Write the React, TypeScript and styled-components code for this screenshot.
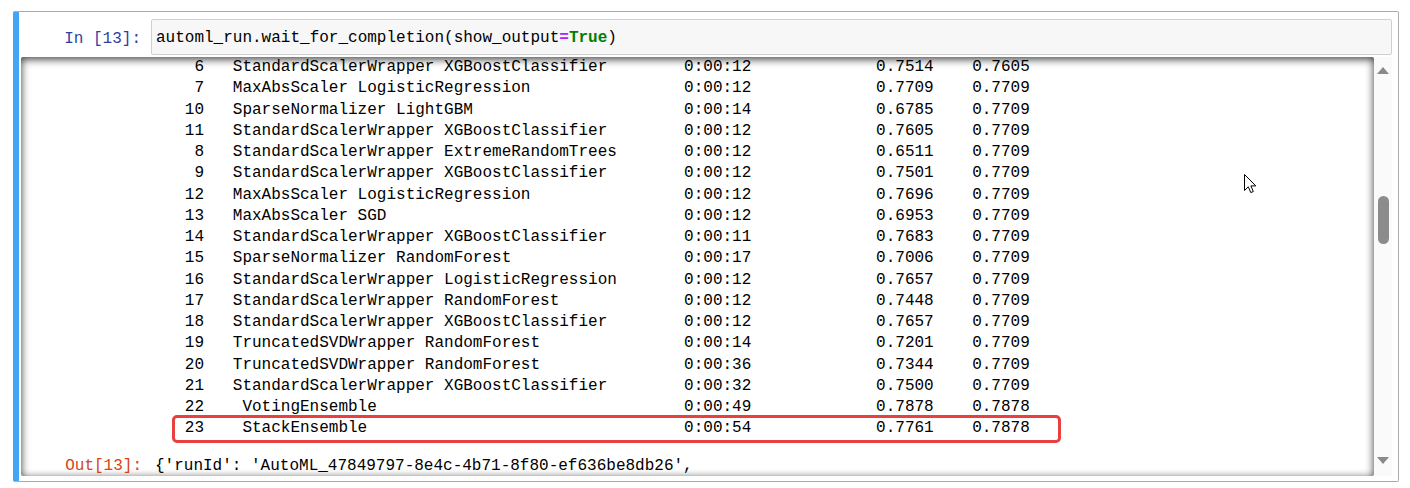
import React from 'react';
import styled, { createGlobalStyle } from 'styled-components';

// Styles
const GlobalStyle = createGlobalStyle`
  html, body {
    margin: 0;
    padding: 0;
    background: #ffffff;
  }
  body {
    font-family: "Liberation Mono", "DejaVu Sans Mono", monospace;
    font-size: 16px;
    color: #000000;
  }
`;

const Page = styled.div`
  position: relative;
  width: 1410px;
  height: 488px;
  padding: 11px 0 0 13px;
  box-sizing: border-box;
  overflow: hidden;
`;

const Cell = styled.div`
  width: 1386px;
  height: 471px;
  box-sizing: border-box;
  border: 1px solid #ababab;
  border-left: 6px solid #42a5f5;
  border-radius: 2px;
  padding: 7px 6px 5px 1px;
  display: flex;
  flex-direction: column;
  gap: 2px;
`;

const InputRow = styled.div`
  display: flex;
  align-items: stretch;
  height: 36px;
`;

const Prompt = styled.div<{ $out?: boolean }>`
  flex: 0 0 131px;
  box-sizing: border-box;
  padding-right: 10px;
  padding-top: 2px;
  text-align: right;
  line-height: 36px;
  color: ${(p) => (p.$out ? '#d84315' : '#303f9f')};
  white-space: pre;
`;

const CodeBox = styled.div`
  flex: 1;
  background: #f7f7f7;
  border: 1px solid #cfcfcf;
  border-radius: 2px;
  padding: 2px 0 0 4px;
  box-sizing: border-box;
  line-height: 32px;
  white-space: pre;
`;

const Operator = styled.span`
  color: #aa22ff;
  font-weight: bold;
`;

const Keyword = styled.span`
  color: #008000;
  font-weight: bold;
`;

const OutputScroll = styled.div`
  display: flex;
  height: 419px;
  margin-left: 1px;
`;

const OutputContent = styled.div`
  flex: 1;
  overflow: hidden;
  border-radius: 2px;
  box-shadow: inset 0 2px 8px rgba(0, 0, 0, 0.8);
`;

const Stream = styled.div`
  padding-left: 135px;
`;

const Row = styled.div<{ $highlight?: boolean }>`
  position: relative;
  display: grid;
  grid-template-columns: 5ch 50ch 20ch 10ch 1fr;
  line-height: 21.25px;
  height: 21.25px;
  white-space: pre;

  ${(p) =>
    p.$highlight &&
    `
    &::after {
      content: '';
      position: absolute;
      left: 16px;
      top: -3px;
      width: 889px;
      height: 28px;
      box-sizing: border-box;
      border: 3px solid #e8403f;
      border-radius: 5px;
      pointer-events: none;
    }
  `}
`;

const Num = styled.span`
  text-align: right;
`;

const Name = styled.span`
  padding-left: 3ch;
`;

const ResultRow = styled.div`
  display: flex;
  margin-top: 16px;
  line-height: 21.25px;
`;

const ResultPrompt = styled(Prompt)`
  line-height: 21.25px;
  padding-top: 0;
`;

const ResultText = styled.div`
  padding-left: 3px;
  white-space: pre;
`;

const Scrollbar = styled.div`
  flex: 0 0 18px;
  background: #fafafa;
  display: flex;
  flex-direction: column;
  align-items: center;
  padding: 10px 0 12px;
  box-sizing: border-box;
`;

const Arrow = styled.div<{ $down?: boolean }>`
  width: 0;
  height: 0;
  border-left: 6.5px solid transparent;
  border-right: 6.5px solid transparent;
  ${(p) =>
    p.$down
      ? 'border-top: 7px solid #8a8a8a;'
      : 'border-bottom: 7px solid #8a8a8a;'}
`;

const Track = styled.div`
  flex: 1;
  display: flex;
  justify-content: center;
`;

const Thumb = styled.div`
  width: 11px;
  height: 48px;
  margin-top: 122px;
  border-radius: 6px;
  background: #8c8c8c;
`;

const Cursor = styled.svg`
  position: absolute;
  left: 1244px;
  top: 174px;
`;

interface Run {
  iter: number;
  pipeline: string;
  duration: string;
  metric: string;
  best: string;
}

const runs: Run[] = [
  { iter: 6, pipeline: 'StandardScalerWrapper XGBoostClassifier', duration: '0:00:12', metric: '0.7514', best: '0.7605' },
  { iter: 7, pipeline: 'MaxAbsScaler LogisticRegression', duration: '0:00:12', metric: '0.7709', best: '0.7709' },
  { iter: 10, pipeline: 'SparseNormalizer LightGBM', duration: '0:00:14', metric: '0.6785', best: '0.7709' },
  { iter: 11, pipeline: 'StandardScalerWrapper XGBoostClassifier', duration: '0:00:12', metric: '0.7605', best: '0.7709' },
  { iter: 8, pipeline: 'StandardScalerWrapper ExtremeRandomTrees', duration: '0:00:12', metric: '0.6511', best: '0.7709' },
  { iter: 9, pipeline: 'StandardScalerWrapper XGBoostClassifier', duration: '0:00:12', metric: '0.7501', best: '0.7709' },
  { iter: 12, pipeline: 'MaxAbsScaler LogisticRegression', duration: '0:00:12', metric: '0.7696', best: '0.7709' },
  { iter: 13, pipeline: 'MaxAbsScaler SGD', duration: '0:00:12', metric: '0.6953', best: '0.7709' },
  { iter: 14, pipeline: 'StandardScalerWrapper XGBoostClassifier', duration: '0:00:11', metric: '0.7683', best: '0.7709' },
  { iter: 15, pipeline: 'SparseNormalizer RandomForest', duration: '0:00:17', metric: '0.7006', best: '0.7709' },
  { iter: 16, pipeline: 'StandardScalerWrapper LogisticRegression', duration: '0:00:12', metric: '0.7657', best: '0.7709' },
  { iter: 17, pipeline: 'StandardScalerWrapper RandomForest', duration: '0:00:12', metric: '0.7448', best: '0.7709' },
  { iter: 18, pipeline: 'StandardScalerWrapper XGBoostClassifier', duration: '0:00:12', metric: '0.7657', best: '0.7709' },
  { iter: 19, pipeline: 'TruncatedSVDWrapper RandomForest', duration: '0:00:14', metric: '0.7201', best: '0.7709' },
  { iter: 20, pipeline: 'TruncatedSVDWrapper RandomForest', duration: '0:00:36', metric: '0.7344', best: '0.7709' },
  { iter: 21, pipeline: 'StandardScalerWrapper XGBoostClassifier', duration: '0:00:32', metric: '0.7500', best: '0.7709' },
  { iter: 22, pipeline: ' VotingEnsemble', duration: '0:00:49', metric: '0.7878', best: '0.7878' },
  { iter: 23, pipeline: ' StackEnsemble', duration: '0:00:54', metric: '0.7761', best: '0.7878' },
];

const App: React.FC = () => {
  return (
    <Page>
      <GlobalStyle />
      <Cell>
        <InputRow>
          <Prompt>In [13]:</Prompt>
          <CodeBox>
            automl_run.wait_for_completion(show_output<Operator>=</Operator>
            <Keyword>True</Keyword>)
          </CodeBox>
        </InputRow>

        <OutputScroll>
          <OutputContent>
            <Stream>
              {runs.map((run) => (
                <Row key={run.iter} $highlight={run.iter === 23}>
                  <Num>{run.iter}</Num>
                  <Name>{run.pipeline}</Name>
                  <span>{run.duration}</span>
                  <span>{run.metric}</span>
                  <span>{run.best}</span>
                </Row>
              ))}
            </Stream>
            <ResultRow>
              <ResultPrompt $out>Out[13]:</ResultPrompt>
              <ResultText>
                {"{'runId': 'AutoML_47849797-8e4c-4b71-8f80-ef636be8db26',"}
              </ResultText>
            </ResultRow>
          </OutputContent>

          <Scrollbar>
            <Arrow />
            <Track>
              <Thumb />
            </Track>
            <Arrow $down />
          </Scrollbar>
        </OutputScroll>
      </Cell>

      <Cursor width="13" height="20" viewBox="0 0 13 20">
        <path
          d="M0.5 0.5 L0.5 16.5 L4.3 12.8 L6.8 18.6 L9.3 17.5 L6.9 11.9 L11.8 11.9 Z"
          fill="#ffffff"
          stroke="#000000"
          strokeWidth="1"
          strokeLinejoin="miter"
        />
      </Cursor>
    </Page>
  );
};

export default App;
